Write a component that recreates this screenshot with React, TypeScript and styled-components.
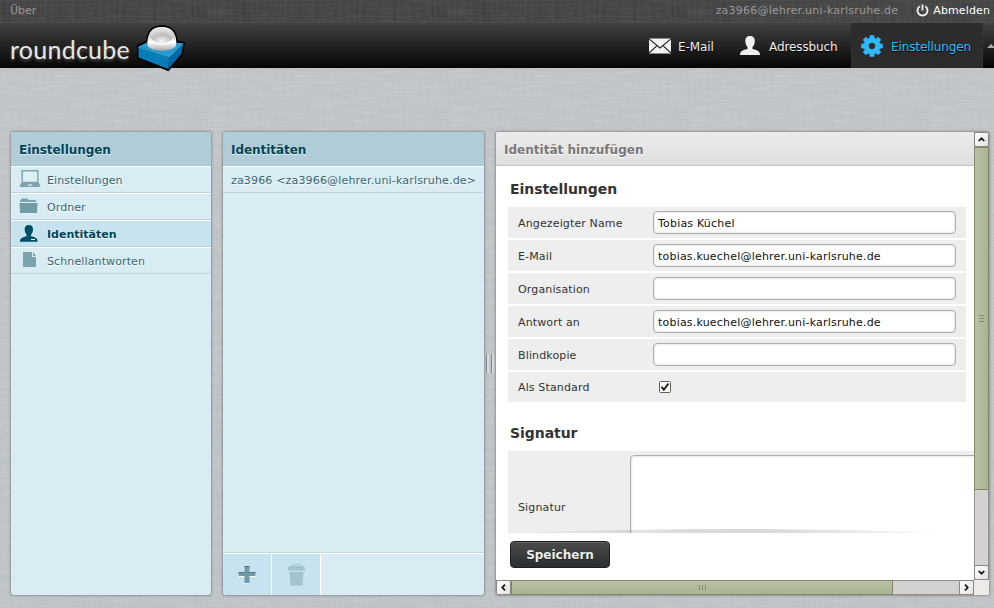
import React from 'react';
import styled, { createGlobalStyle, css } from 'styled-components';

const weave = (seed: number, frequency: string, tone: number, strength: number) =>
  `url("data:image/svg+xml,${encodeURIComponent(
    `<svg xmlns='http://www.w3.org/2000/svg' width='240' height='240'><filter id='f' x='0' y='0' width='100%' height='100%'><feTurbulence type='fractalNoise' baseFrequency='${frequency}' numOctaves='2' seed='${seed}' stitchTiles='stitch'/><feColorMatrix values='0 0 0 0 ${tone} 0 0 0 0 ${tone} 0 0 0 0 ${tone} ${strength} 0 0 0 ${-strength * 0.42}'/></filter><rect width='240' height='240' filter='url(#f)'/></svg>`
  )}")`;

const GlobalStyle = createGlobalStyle`
  * { box-sizing: border-box; }
  html, body, #root { height: 100%; }
  body {
    margin: 0;
    overflow: hidden;
    font: 11px/15px "DejaVu Sans", Verdana, sans-serif;
    color: #333;
    background: ${weave(3, '0.03 0.5', 1, 0.28)}, ${weave(8, '0.5 0.03', 0.35, 0.22)},
      linear-gradient(#c1c5c8, #bec3c7);
  }
`;

const Page = styled.div`
  display: flex;
  flex-direction: column;
  height: 608px;
  width: 994px;
`;

const TopBar = styled.div`
  display: flex;
  align-items: center;
  height: 22px;
  padding: 0 4px 2px 10px;
  color: #999;
  background: ${weave(5, '0.03 0.5', 1, 0.12)}, ${weave(6, '0.5 0.03', 0, 0.35)}, #484848;
`;

const Account = styled.span`
  margin-left: auto;
  letter-spacing: 0.22px;
`;

const Logout = styled.a`
  display: flex;
  align-items: center;
  gap: 4px;
  margin-left: 18px;
  letter-spacing: 0.12px;
  color: #fff;
`;

const Header = styled.header`
  display: flex;
  height: 46px;
  padding-left: 10px;
  background: linear-gradient(#404040, #060606);
  border-top: 1px solid #4c4c4c;
`;

const Brand = styled.div`
  display: flex;
  width: 180px;
  align-items: flex-start;
`;

const BrandName = styled.span`
  width: 125px;
  margin-top: 10px;
  font: 400 25px/32px Lato, sans-serif;
  letter-spacing: 0.25px;
  color: #e6e6e6;
  white-space: nowrap;
  text-shadow: 0 2px 3px rgba(255, 255, 255, 0.25);
`;

const CubeArt = styled.svg`
  flex: none;
  margin-top: 1px;
`;

const Nav = styled.nav`
  display: flex;
  margin-left: auto;
`;

const NavItem = styled.a<{ $active?: boolean; $width: number; $gap: number }>`
  display: flex;
  align-items: center;
  gap: ${(p) => p.$gap}px;
  width: ${(p) => p.$width}px;
  padding: 0 0 0 10px;
  font-size: 12px;
  letter-spacing: -0.1px;
  white-space: nowrap;
  color: #eee;
  text-shadow: 0 1px 1px #000;
  ${(p) =>
    p.$active &&
    css`
      background: #2c2c2c;
      color: #2fbfff;
    `}
`;

const NavLabel = styled.span`
  padding-top: 3px;
`;

const Collapse = styled.span`
  display: flex;
  align-items: center;
  justify-content: flex-end;
  width: 12px;
  border-left: 1px solid #333;
`;

const Main = styled.main`
  display: flex;
  margin: 64px 5px 0 11px;
  height: 463px;
`;

const Panel = styled.section<{ $width: number; $light?: boolean }>`
  display: flex;
  flex-direction: column;
  flex: none;
  width: ${(p) => p.$width}px;
  height: 463px;
  overflow: hidden;
  border-radius: 3px;
  background: ${(p) => (p.$light ? '#fff' : '#d9ecf3')};
  box-shadow: 0 0 2px 1px rgba(120, 120, 120, 0.65);
`;

const PanelTitle = styled.h2<{ $light?: boolean }>`
  flex: none;
  margin: 0;
  height: 34px;
  padding: 1px 8px 0;
  font-size: 12px;
  line-height: 35px;
  letter-spacing: -0.05px;
  color: #004458;
  background: #b0ccd7;
  border-bottom: 1px solid #a9c5cf;
  text-shadow: 0 1px 1px #e4f2f7;
  ${(p) =>
    p.$light &&
    css`
      letter-spacing: 0.02px;
      color: #777;
      background: linear-gradient(#ebebeb, #dfdfdf);
      border-bottom-color: #c4c4c4;
      text-shadow: 0 1px 1px #fff;
    `}
`;

const Row = styled.a<{ $selected?: boolean; $spacing?: number }>`
  display: flex;
  align-items: center;
  height: 27px;
  padding: 1px 8px 0;
  border-top: 1px solid #fff;
  border-bottom: 1px solid #bbd3da;
  letter-spacing: ${(p) => p.$spacing ?? 0.08}px;
  color: #376572;
  white-space: nowrap;
  text-shadow: 0 1px 1px #fff;
  ${(p) =>
    p.$selected &&
    css`
      color: #004458;
      font-weight: bold;
      background: #c7e3ef;
    `}
`;

const RowIcon = styled.svg`
  flex: none;
  width: 28px;
  height: 24px;
`;

const PanelFooter = styled.div`
  display: flex;
  height: 43px;
  margin-top: auto;
  border-top: 1px solid #c3d9e1;
  box-shadow: inset 0 1px #fff;
  padding-top: 1px;
`;

const FooterButton = styled.button`
  width: 49px;
  padding: 0;
  border: 0;
  border-right: 1px solid #fff;
  background: #c7e3ef;
  display: flex;
  align-items: center;
  justify-content: center;
`;

const Gap = styled.div`
  width: 12px;
`;

const Splitter = styled.div`
  display: flex;
  align-items: center;
  justify-content: center;
  gap: 2px;
  width: 12px;
  &::before,
  &::after {
    content: '';
    width: 2px;
    height: 19px;
    border-left: 1px solid #7b8790;
    background: #d6dcdf;
  }
`;

const FrameRow = styled.div`
  display: flex;
  height: 448px;
`;

const Frame = styled.div`
  width: 478px;
  overflow: hidden;
`;

const FormScroll = styled.div`
  height: 367px;
  padding-left: 12px;
  overflow: hidden;
`;

const GroupTitle = styled.h3<{ $top: number }>`
  margin: ${(p) => p.$top}px 0 0 2px;
  font-size: 14px;
  line-height: 18px;
  letter-spacing: -0.06px;
  color: #333;
`;

const Fields = styled.div`
  display: flex;
  flex-direction: column;
  gap: 2px;
  width: 458px;
  margin-top: 9px;
`;

const Field = styled.label`
  display: flex;
  align-items: center;
  height: 31px;
  padding: 0 10px;
  background: #eee;
  &:last-child {
    height: 30px;
  }
`;

const FieldName = styled.span`
  width: 135px;
  padding-top: 1px;
  letter-spacing: 0.14px;
`;

const TextInput = styled.input`
  width: 303px;
  height: 23px;
  padding: 1px 4px 0;
  border: 1px solid #adadad;
  border-radius: 4px;
  font: inherit;
  letter-spacing: 0.2px;
  color: #111;
  background: #fff;
  box-shadow: inset 0 0 2px 1px rgba(0, 0, 0, 0.09);
  outline: none;
`;

const CheckMark = styled.svg`
  margin-left: 6px;
`;

const SignatureField = styled.label`
  display: flex;
  width: 700px;
  height: 82px;
  margin-top: 9px;
  padding: 4px 10px 0;
  background: #eee;
`;

const SignatureName = styled.span`
  width: 112px;
  padding-top: 45px;
  letter-spacing: 0.14px;
`;

const SignatureArea = styled.textarea`
  width: 560px;
  height: 110px;
  resize: none;
  border: 1px solid #adadad;
  border-radius: 4px;
  background: #fff;
  box-shadow: inset 0 0 2px 1px rgba(0, 0, 0, 0.09);
`;

const FormButtons = styled.div`
  position: relative;
  height: 47px;
  padding: 8px 14px;
  background: #fff;
`;

const ScrollShade = styled.svg`
  position: absolute;
  left: 12px;
  top: -5px;
`;

const SaveButton = styled.button`
  display: block;
  width: 100px;
  height: 27px;
  padding: 0;
  border: 1px solid #1c2124;
  border-radius: 4px;
  font: bold 12px "DejaVu Sans", sans-serif;
  color: #ededed;
  background: linear-gradient(#4b4b4b, #2a2e31);
  box-shadow: inset 0 1px rgba(255, 255, 255, 0.12);
  text-shadow: 0 1px 1px #222;
`;

const Bar = styled.div<{ $vertical?: boolean }>`
  display: flex;
  flex: none;
  flex-direction: ${(p) => (p.$vertical ? 'column' : 'row')};
  width: ${(p) => (p.$vertical ? 15 : 478)}px;
  height: ${(p) => (p.$vertical ? 448 : 15)}px;
  justify-content: space-between;
  background: #d4d2d0;
  box-shadow: inset 0 0 0 1px #92918c;
`;

const Arrow = styled.span`
  display: flex;
  align-items: center;
  justify-content: center;
  flex: none;
  width: 15px;
  height: 15px;
  border: 1px solid #898883;
  border-radius: 2px;
  background: linear-gradient(135deg, #fff, #e4e2df);
`;

const Thumb = styled.span<{ $vertical?: boolean }>`
  display: flex;
  flex-direction: ${(p) => (p.$vertical ? 'column' : 'row')};
  align-items: center;
  justify-content: center;
  gap: 2px;
  flex: none;
  width: ${(p) => (p.$vertical ? 15 : 382)}px;
  height: ${(p) => (p.$vertical ? 343 : 15)}px;
  margin-${(p) => (p.$vertical ? 'bottom' : 'right')}: auto;
  border: 1px solid #7f8867;
  background: linear-gradient(${(p) => (p.$vertical ? '90deg' : '180deg')}, #b8c2a6, #a9b496);
`;

const Grip = styled.i<{ $vertical?: boolean }>`
  width: ${(p) => (p.$vertical ? 5 : 1)}px;
  height: ${(p) => (p.$vertical ? 1 : 5)}px;
  background: #858d74;
`;

const FrameBottom = styled.div`
  display: flex;
  height: 15px;
  background: #ecebe8;
`;

const Cube = () => (
  <CubeArt width="52" height="48" viewBox="135 24 52 48">
    <defs>
      <linearGradient id="ball" x1="0" y1="0" x2="0" y2="1">
        <stop offset="0" stopColor="#fff" />
        <stop offset="0.35" stopColor="#c2c2c2" />
        <stop offset="0.62" stopColor="#fff" />
        <stop offset="0.78" stopColor="#ddd" />
        <stop offset="1" stopColor="#a9a9a9" />
      </linearGradient>
      <radialGradient id="glow" cx="0.5" cy="0.9" r="0.75">
        <stop offset="0" stopColor="#f7f7f7" />
        <stop offset="0.6" stopColor="#bdbdbd" />
        <stop offset="1" stopColor="#dedede" />
      </radialGradient>
    </defs>
    <path d="M136.800 44.800L146 41.200C146 31 152 25.200 161.800 25.200C171.500 25.200 177.500 31 177.500 40.500L185 41.800L183 54.500L168.500 71.200L137 58.800Z" fill="#000" />
    <path d="M138.500 46.500L150 41L183.400 43.300L169.500 56.500Z" fill="#279bd0" />
    <path d="M138.500 47L169.300 56.600L168.300 69L138.500 57.500Z" fill="#087cb7" />
    <path d="M169.500 56.500L183.400 43.300L181.500 53.800L168.300 69Z" fill="#0069a5" />
    <path d="M138.500 47L169.300 56.600L183 43.500" fill="none" stroke="#55bde6" strokeWidth=".8" />
    <path d="M147.600 46C146.500 34 151 27 161.800 27C172.600 27 177.400 34 176 46Q173 50.500 161.800 50.700Q151 50.500 147.600 46Z" fill="url(#ball)" />
    <ellipse cx="161.800" cy="35.600" rx="11.500" ry="7.400" fill="url(#glow)" />
    <path d="M148 41Q161 47.500 176 41" stroke="#fff" strokeWidth="1.300" fill="none" opacity=".8" />
  </CubeArt>
);

const Person = ({ fill }: { fill: string }) => (
  <path
    fill={fill}
    d="M10 0C6.700 0 5.100 2.200 5.300 5.500C5.500 8.500 6.700 10 7.600 11.200L7.500 12.900C3 14 0 14.800 0 19H20C20 14.800 17 14 12.500 12.900L12.400 11.200C13.500 10 14.600 8.500 14.800 5.500C15 2.200 13.300 0 10 0Z"
  />
);

const gearTeeth = [0, 45, 90, 135, 180, 225, 270, 315];

const rows = [
  { label: 'Angezeigter Name', value: 'Tobias Küchel' },
  { label: 'E-Mail', value: 'tobias.kuechel@lehrer.uni-karlsruhe.de' },
  { label: 'Organisation', value: '' },
  { label: 'Antwort an', value: 'tobias.kuechel@lehrer.uni-karlsruhe.de' },
  { label: 'Blindkopie', value: '' },
];

const ArrowIcon = ({ turn }: { turn: number }) => (
  <svg width="9" height="9" viewBox="0 0 9 9">
    <path d="M1.700 6L4.500 3.300L7.300 6" transform={`rotate(${turn} 4.500 4.500)`} fill="none" stroke="#111" strokeWidth="1.700" />
  </svg>
);

const Grips = ({ vertical }: { vertical?: boolean }) => (
  <>
    <Grip $vertical={vertical} />
    <Grip $vertical={vertical} />
    <Grip $vertical={vertical} />
  </>
);

export default function App() {
  return (
    <Page>
      <GlobalStyle />
      <TopBar>
        <span>Über</span>
        <Account>za3966@lehrer.uni-karlsruhe.de</Account>
        <Logout>
          <svg width="13" height="13" viewBox="0 0 13 13" fill="none" stroke="#eee" strokeWidth="1.900">
            <path d="M3.800 2.300A5 5 0 1 0 9.200 2.300M6.500 .5V6.500" />
          </svg>
          Abmelden
        </Logout>
      </TopBar>
      <Header>
        <Brand>
          <BrandName>roundcube</BrandName>
          <Cube />
        </Brand>
        <Nav>
          <NavItem $width={91} $gap={7}>
            <svg width="22" height="16" viewBox="0 0 22 16">
              <path d="M0 .5H22V15.500H0Z" fill="#f2f2f2" />
              <path d="M0 .8L11 10L22 .8M0 15L8 7.600M22 15L14 7.600" fill="none" stroke="#222" strokeWidth="1.100" />
            </svg>
            <NavLabel>E-Mail</NavLabel>
          </NavItem>
          <NavItem $width={121} $gap={9}>
            <svg width="20" height="19" viewBox="0 0 20 19"><Person fill="#f0f0f0" /></svg>
            <NavLabel>Adressbuch</NavLabel>
          </NavItem>
          <NavItem $active $width={131} $gap={8}>
            <svg width="22" height="22" viewBox="-11 -11 22 22">
              {gearTeeth.map((angle) => (
                <path key={angle} d="M-2.900 -7L-2.100 -10.800H2.100L2.900 -7Z" fill="#2fb9fb" transform={`rotate(${angle})`} />
              ))}
              <circle r="5.700" fill="none" stroke="#2fb9fb" strokeWidth="4.800" />
            </svg>
            <NavLabel>Einstellungen</NavLabel>
          </NavItem>
          <Collapse>
            <svg width="7" height="4" viewBox="0 0 7 4"><path d="M0 4L4 0L8 4Z" fill="#aaa" /></svg>
          </Collapse>
        </Nav>
      </Header>
      <Main>
        <Panel $width={200}>
          <PanelTitle>Einstellungen</PanelTitle>
          <Row>
            <RowIcon viewBox="0 0 28 24">
              <path d="M3.200 2.700H18.800V14.500H3.200Z" fill="#dff0f5" stroke="#7da4ae" strokeWidth="1.400" />
              <path d="M2 15H20L21.500 19H.5Z" fill="#7da4ae" /><path d="M9 16.500H13V17.500H9Z" fill="#fff" />
            </RowIcon>
            Einstellungen
          </Row>
          <Row>
            <RowIcon viewBox="0 0 28 24">
              <path d="M1 7V5H2V3.500H8.500L10 5H17V7Z" fill="#7fa6b0" />
              <path d="M.5 8H18.500L18 18H1Z" fill="#739ba6" />
            </RowIcon>
            Ordner
          </Row>
          <Row $selected $spacing={0}>
            <RowIcon viewBox="0 0 28 24">
              <g transform="translate(1 3) scale(.88)"><Person fill="#004f66" /></g>
              <path d="M12 17H16V18H12Z" fill="#fff" />
            </RowIcon>
            Identitäten
          </Row>
          <Row $spacing={0.12}>
            <RowIcon viewBox="0 0 28 24">
              <path d="M4 3H13V8H17V18H4Z" fill="#7aa3ad" /><path d="M14 3L17 7H14Z" fill="#7aa3ad" />
            </RowIcon>
            Schnellantworten
          </Row>
        </Panel>
        <Gap />
        <Panel $width={261}>
          <PanelTitle>Identitäten</PanelTitle>
          <Row $spacing={0.17}>za3966 &lt;za3966@lehrer.uni-karlsruhe.de&gt;</Row>
          <PanelFooter>
            <FooterButton aria-label="Hinzufügen">
              <svg width="18" height="19" viewBox="0 0 18 19">
                <path d="M7 2H11V8H17.500V12H11V18.500H7V12H.5V8H7Z" fill="#fff" />
                <path d="M6.500 1H11.500V7H17.500V11H11.500V18H6.500V11H.5V7H6.500Z" fill="#6f9ba6" />
                <path d="M6.500 1.500H11.500M.5 7.500H6.500M11.500 7.500H17.500" stroke="#4e7984" />
              </svg>
            </FooterButton>
            <FooterButton aria-label="Löschen">
              <svg width="19" height="24" viewBox="0 0 19 24" fill="#a3c3cf">
                <path d="M5 3Q5 1 7 1H12Q14 1 14 3H17L18.500 7.500H.5L2 3ZM6.500 3H12.500V2H6.500Z" fillRule="evenodd" />
                <path d="M2.500 9H16.500L15.500 22.500H3.500Z" />
              </svg>
            </FooterButton>
          </PanelFooter>
        </Panel>
        <Splitter />
        <Panel $width={493} $light>
          <FrameRow>
            <Frame>
              <PanelTitle $light>Identität hinzufügen</PanelTitle>
              <FormScroll>
                <GroupTitle $top={14}>Einstellungen</GroupTitle>
                <Fields>
                  {rows.map((row) => (
                    <Field key={row.label}>
                      <FieldName>{row.label}</FieldName>
                      <TextInput defaultValue={row.value} />
                    </Field>
                  ))}
                  <Field>
                    <FieldName>Als Standard</FieldName>
                    <CheckMark width="12" height="12" viewBox="0 0 12 12">
                      <rect x=".5" y=".5" width="11" height="11" rx="1" fill="#fff" stroke="#625f58" />
                      <path d="M2.500 5.800L4.800 8.700L9.500 2.500" fill="none" stroke="#111" strokeWidth="1.800" />
                    </CheckMark>
                  </Field>
                </Fields>
                <GroupTitle $top={22}>Signatur</GroupTitle>
                <SignatureField>
                  <SignatureName>Signatur</SignatureName>
                  <SignatureArea />
                </SignatureField>
              </FormScroll>
              <FormButtons>
                <ScrollShade width="450" height="5" viewBox="0 0 450 5">
                  <defs>
                    <linearGradient id="shade">
                      <stop offset="0" stopColor="#888" stopOpacity="0" />
                      <stop offset=".4" stopColor="#888" stopOpacity=".32" />
                      <stop offset=".6" stopColor="#888" stopOpacity=".32" />
                      <stop offset="1" stopColor="#888" stopOpacity="0" />
                    </linearGradient>
                  </defs>
                  <path d="M0 5Q225 -3 450 5Z" fill="url(#shade)" />
                </ScrollShade>
                <SaveButton>Speichern</SaveButton>
              </FormButtons>
            </Frame>
            <Bar $vertical>
              <Arrow><ArrowIcon turn={0} /></Arrow>
              <Thumb $vertical><Grips vertical /></Thumb>
              <Arrow><ArrowIcon turn={180} /></Arrow>
            </Bar>
          </FrameRow>
          <FrameBottom>
            <Bar>
              <Arrow><ArrowIcon turn={270} /></Arrow>
              <Thumb><Grips /></Thumb>
              <Arrow><ArrowIcon turn={90} /></Arrow>
            </Bar>
          </FrameBottom>
        </Panel>
      </Main>
    </Page>
  );
}
